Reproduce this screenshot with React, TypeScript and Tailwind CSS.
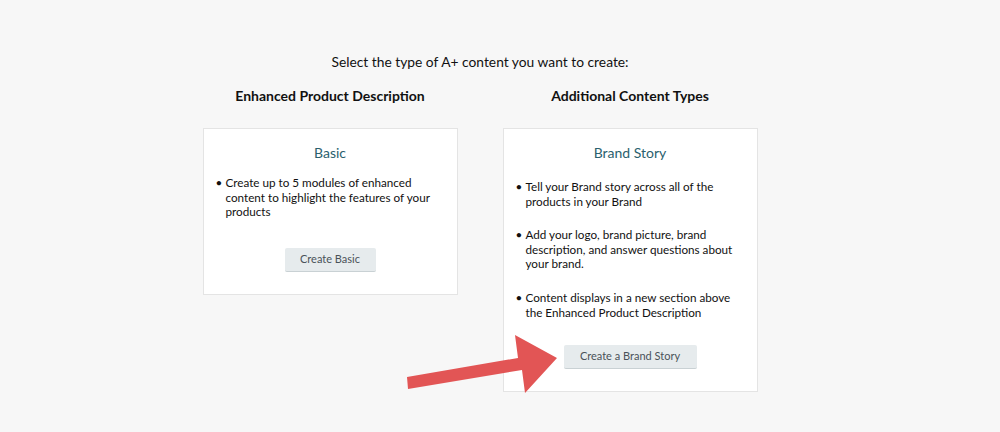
import { type ReactNode } from 'react';

type CardProps = {
  title: string;
  bullets: ReactNode[];
  action: string;
  buttonWidth: string;
  listGap: string;
  actionGap: string;
};

function OptionCard({ title, bullets, action, buttonWidth, listGap, actionGap }: CardProps) {
  return (
    <div className="flex w-[255px] flex-col items-center border border-[#e4e4e4] bg-white pt-[14px] pb-[22px]">
      <h3 className="text-[14px] leading-[20px] text-[#2b5f6e]">{title}</h3>
      <ul className={`${listGap} flex w-full flex-col gap-[19px] pl-[12px] pr-[4px]`}>
        {bullets.map((b, i) => (
          <li key={i} className="flex text-[11.7px] leading-[14.6px] text-[#111]">
            <span className="w-[10px] shrink-0">•</span>
            <span>{b}</span>
          </li>
        ))}
      </ul>
      <button
        className={`${actionGap} ${buttonWidth} h-[24px] rounded-[2px] border-b border-[#c9d1d4] bg-[#e6ebed] text-[11px] text-[#4a5259]`}
      >
        {action}
      </button>
    </div>
  );
}

function Arrow() {
  return (
    <svg
      className="pointer-events-none absolute left-0 top-0"
      width="1000"
      height="432"
      viewBox="0 0 1000 432"
    >
      <polygon
        points="407,377 518,358 515,335 557,358 525,393 522,370 408,389"
        fill="#e25555"
      />
    </svg>
  );
}

export default function App() {
  return (
    <div
      className="relative h-[432px] w-[1000px] overflow-hidden bg-[#f7f7f7]"
      style={{ fontFamily: 'Lato, "Noto Sans", sans-serif' }}
    >
      <div className="flex flex-col items-center pr-[40px] pt-[52px]">
        <p className="text-[13.8px] leading-[20px] text-[#111]">
          Select the type of A+ content you want to create:
        </p>
        <div className="mt-[14px] flex items-start gap-[45px]">
          <div className="flex flex-col items-center">
            <h2 className="text-[14px] font-bold leading-[20px] text-[#111]">
              Enhanced Product Description
            </h2>
            <div className="mt-[22px]">
              <OptionCard
                title="Basic"
                bullets={[
                  <>
                    Create up to 5 modules of enhanced
                    <br />
                    content to highlight the features of your
                    <br />
                    products
                  </>,
                ]}
                action="Create Basic"
                buttonWidth="w-[91px]"
                listGap="mt-[12px]"
                actionGap="mt-[29px]"
              />
            </div>
          </div>
          <div className="flex flex-col items-center">
            <h2 className="text-[14px] font-bold leading-[20px] text-[#111]">
              Additional Content Types
            </h2>
            <div className="mt-[22px]">
              <OptionCard
                title="Brand Story"
                bullets={[
                  <>
                    Tell your Brand story across all of the
                    <br />
                    products in your Brand
                  </>,
                  <>
                    Add your logo, brand picture, brand
                    <br />
                    description, and answer questions about
                    <br />
                    your brand.
                  </>,
                  <>
                    Content displays in a new section above
                    <br />
                    the Enhanced Product Description
                  </>,
                ]}
                action="Create a Brand Story"
                buttonWidth="w-[133px]"
                listGap="mt-[16px]"
                actionGap="mt-[26px]"
              />
            </div>
          </div>
        </div>
      </div>
      <Arrow />
    </div>
  );
}
